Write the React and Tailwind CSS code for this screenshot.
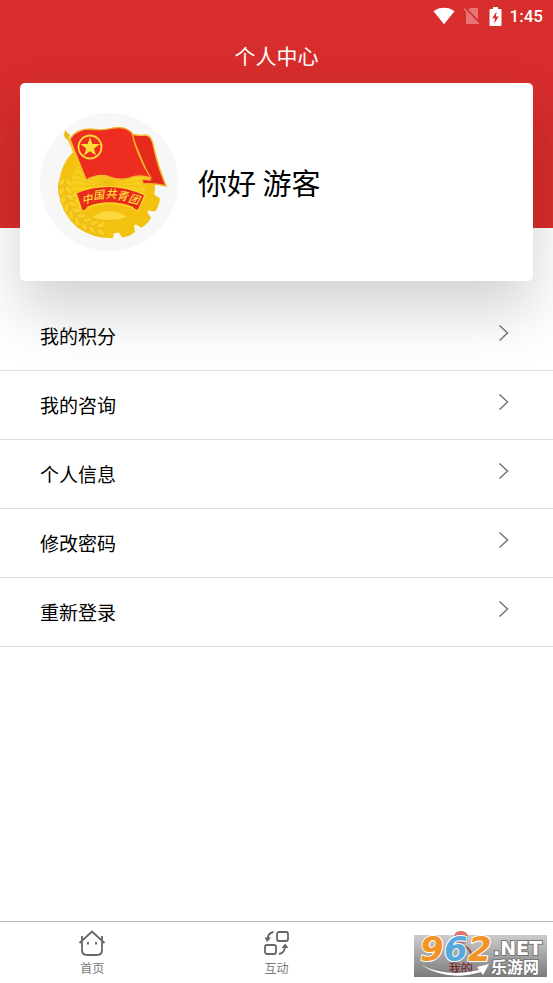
import React from "react";

const menuItems = ["我的积分", "我的咨询", "个人信息", "修改密码", "重新登录"];

function StatusBar() {
  return (
    <div className="flex h-8 items-center justify-end pr-2.5 text-white">
      <svg className="mr-2 h-[18px] w-[22px]" viewBox="0 0 22 18" aria-hidden="true">
        <path d="M0.5 4.2C6.5-.4 15.5-.4 21.5 4.2L11 17.2Z" fill="currentColor" />
      </svg>
      <svg className="mr-2 h-[18px] w-[18px]" viewBox="0 0 18 18" aria-hidden="true">
        <path d="M7 1h7q1 0 1 1v14q0 1-1 1H4q-1 0-1-1V5Z" fill="#e67474" />
        <path d="M2.5 1.2L17.5 17" stroke="#d72d2c" strokeWidth="2" />
        <path d="M1 1.5L16 17.2" stroke="#e67474" strokeWidth="1.6" />
      </svg>
      <svg className="mr-2 h-[19px] w-[13px]" viewBox="0 0 13 19" aria-hidden="true">
        <path d="M4 0h5v2h2.5q1 0 1 1v15q0 1-1 1h-10q-1 0-1-1V3q0-1 1-1H4Z" fill="currentColor" />
        <path d="M7.6 4.5L3.2 11.2H6L5.2 16.5L9.8 9.5H7Z" fill="#d72d2c" />
      </svg>
      <span className="font-[Roboto,sans-serif] text-[17px] font-medium leading-8">1:45</span>
    </div>
  );
}

function Emblem() {
  const teeth = [21, 44, 67];
  const leaves = [98, 109, 120, 131, 142, 153, 164, 175, 186];
  return (
    <svg className="size-[138px] shrink-0" viewBox="0 0 138 138" role="img" aria-label="团徽">
      <circle cx="69" cy="69" r="69" fill="#f7f7f7" />
      {teeth.map((a) => (
        <path key={a} d="M112 64L121 66Q123 73 121 80L112 82Z" fill="#f3c20f" transform={`rotate(${a} 68 73)`} />
      ))}
      <circle cx="67" cy="73" r="48" fill="#f3c20f" />
      <path d="M18 74Q20 100 38 115Q54 126 73 125L74 119L60 90L30 60Q19 62 18 74Z" fill="#f3c20f" />
      <circle cx="68" cy="73" r="37" fill="#f8cf1c" />
      {Array.from({ length: 36 }, (_, i) => (
        <path key={i} d="M68 73V37" stroke="#edbb13" strokeWidth="0.8" transform={`rotate(${i * 10} 68 73)`} />
      ))}
      {leaves.map((a) => (
        <g key={a} transform={`rotate(${a} 67 74)`} fill="#f9cf28" stroke="#e4b116" strokeWidth="0.5">
          <path d="M109 79Q109 71 115 69Q118 76 109 79Z" />
          <path d="M109 79Q101 77 102 70Q109 71 109 79Z" />
        </g>
      ))}
      <path d="M42 98Q70 84 98 98Q86 110 70 110Q52 110 42 98Z" fill="#f3c012" />
      <path d="M52 104Q70 92 87 104Q79 107 70 107Q60 107 52 104Z" fill="#fcd93c" />
      <path d="M36 80Q70 66 105 82L98 98Q94 97 92 94Q69 86 48 94Q46 98 42 98Z" fill="#e82b1d" stroke="#ffd52b" strokeWidth="1.3" />
      <g fill="#ffdd38" fontSize="11" fontStyle="italic" fontWeight="500" fontFamily="'Noto Sans CJK SC', sans-serif" textAnchor="middle">
        <text x="48" y="90" transform="rotate(-12 48 90)">中</text>
        <text x="59" y="86" transform="rotate(-6 59 86)">国</text>
        <text x="71" y="85">共</text>
        <text x="82" y="87" transform="rotate(7 82 87)">青</text>
        <text x="93" y="90" transform="rotate(14 93 90)">团</text>
      </g>
      <path d="M91 21Q98 23 106 22Q111 23 113 31Q117 51 126 73Q114 70 103 71L102 66L110 67Z" fill="#e52a1c" stroke="#f7b92c" strokeWidth="1.4" />
      <path d="M30 26Q36 16 50 16Q63 18 73 15Q86 13 92 20Q97 43 111 65Q100 61 89 65Q79 68 67 63Q57 61 46 67Z" fill="#ee2c20" stroke="#f5b52b" strokeWidth="1.3" />
      <path d="M27 22L47 70" stroke="#f3c522" strokeWidth="2" />
      <path d="M25 17L30 22L28 27L25 25L24 22Z" fill="#edbb19" />
      <circle cx="50" cy="34" r="11.5" fill="none" stroke="#ffdc36" strokeWidth="1.8" />
      <path d="M50 24L52.4 31L60 31.1L54 35.4L56 42.4L50 38.2L44 42.4L46.2 35.4L40.5 31.1L47.6 31Z" fill="#ffdc36" />
    </svg>
  );
}

function HomeIcon() {
  return (
    <svg className="size-7" viewBox="0 0 28 28" fill="none" stroke="#666" strokeWidth="1.8" aria-hidden="true">
      <path d="M1.5 14L14 2.5L26.5 14M4 12V21Q4 26 9 26H19Q24 26 24 21V12M4 7V12M24 7V12" />
      <path d="M10 13V15.5M18 13V15.5" />
    </svg>
  );
}

function SwapIcon() {
  return (
    <svg className="size-7" viewBox="0 0 28 28" fill="none" stroke="#666" strokeWidth="1.8" aria-hidden="true">
      <rect x="15" y="3" width="11" height="9" rx="2" />
      <rect x="3" y="16" width="11" height="9" rx="2" />
      <path d="M11.5 3Q5.5 4 5.5 11" />
      <path d="M17 25Q23 24 23 17" />
      <path d="M2.5 8.5H9L5.2 13Z" fill="#666" stroke="none" />
      <path d="M19.5 19L23.2 14.5L26.5 19Z" fill="#666" stroke="none" />
    </svg>
  );
}

function ProfileIcon() {
  return (
    <svg className="size-7" viewBox="0 0 28 28" fill="none" aria-hidden="true">
      <circle cx="14" cy="9" r="7" fill="#f0a5a5" />
      <path d="M7 9Q7 2 14 2Q21 2 21 9Q14 5 7 9Z" fill="#e27070" />
      <path d="M4 26Q5 17 14 17Q23 17 24 26" stroke="#e27070" strokeWidth="2" />
    </svg>
  );
}

function Watermark() {
  return (
    <svg className="pointer-events-none absolute bottom-[6px] right-[6px] h-[52px] w-[133px]" viewBox="0 -10 133 52" role="img" aria-label="962.NET 乐游网">
      <defs>
        <linearGradient id="plate" x1="0" y1="0" x2="0" y2="1">
          <stop offset="0" stopColor="#000" stopOpacity="0.2" />
          <stop offset="1" stopColor="#000" stopOpacity="0.52" />
        </linearGradient>
      </defs>
      <path d="M0 0H133V42H0Z" fill="url(#plate)" />
      <path d="M7 30Q34 43 65 35L63 32L75 29L69 40L67 37Q34 47 7 30Z" fill="#fff" />
      <g fontFamily="'DejaVu Sans', sans-serif" fontWeight="700" fontStyle="italic" fontSize="34" stroke="#fff" strokeWidth="2" paintOrder="stroke" strokeLinejoin="round">
        <text x="6" y="26" fill="#f39324">9</text>
        <text x="30" y="26" fill="#55a9dc">6</text>
        <text x="54" y="26" fill="#f39324">2</text>
      </g>
      <g fill="#fff" stroke="#777" strokeWidth="2" paintOrder="stroke" fontWeight="700">
        <text x="79" y="20" fontSize="19" fontFamily="'DejaVu Sans', sans-serif">.NET</text>
        <text x="77" y="38" fontSize="16" fontFamily="'Noto Sans CJK SC', sans-serif">乐游网</text>
      </g>
    </svg>
  );
}

const tabs = [
  { label: "首页", Icon: HomeIcon, color: "text-[#777]" },
  { label: "互动", Icon: SwapIcon, color: "text-[#777]" },
  { label: "我的", Icon: ProfileIcon, color: "text-[#d72d2c]" },
];

export default function App() {
  return (
    <div className="flex min-h-screen flex-col bg-white font-['Noto_Sans_CJK_SC',sans-serif] text-black">
      <header className="h-[228px] bg-[#d72d2c]">
        <StatusBar />
        <h1 className="text-center text-[21px] leading-[46px] text-white">个人中心</h1>
      </header>

      <main className="-mt-[145px] flex-1">
        <section className="mx-5 flex h-[198px] items-center gap-5 rounded-[5px] bg-white px-5 shadow-[0_30px_60px_rgba(0,0,0,0.18)]">
          <Emblem />
          <p className="text-[29px] leading-10">你好 游客</p>
        </section>

        <ul className="mt-[21px]">
          {menuItems.map((item) => (
            <li key={item} className="border-b border-[#dedede] not-first:bg-white">
              <button type="button" className="flex h-[68px] w-full items-center justify-between pl-10 pr-11 text-left text-[19px] leading-7">
                {item}
                <svg className="mb-1.5 h-4 w-2.5" viewBox="0 0 10 16" fill="none" stroke="#777" strokeWidth="1.5" aria-hidden="true">
                  <path d="M0.5 0.5L8.5 8L0.5 15.5" />
                </svg>
              </button>
            </li>
          ))}
        </ul>
      </main>

      <nav className="relative grid h-[62px] grid-cols-3 border-t border-[#bbb] bg-white">
        {tabs.map(({ label, Icon, color }) => (
          <button key={label} type="button" className={`flex flex-col items-center pt-[7px] text-[12px] leading-[22px] ${color}`}>
            <Icon />
            {label}
          </button>
        ))}
        <Watermark />
      </nav>
    </div>
  );
}
